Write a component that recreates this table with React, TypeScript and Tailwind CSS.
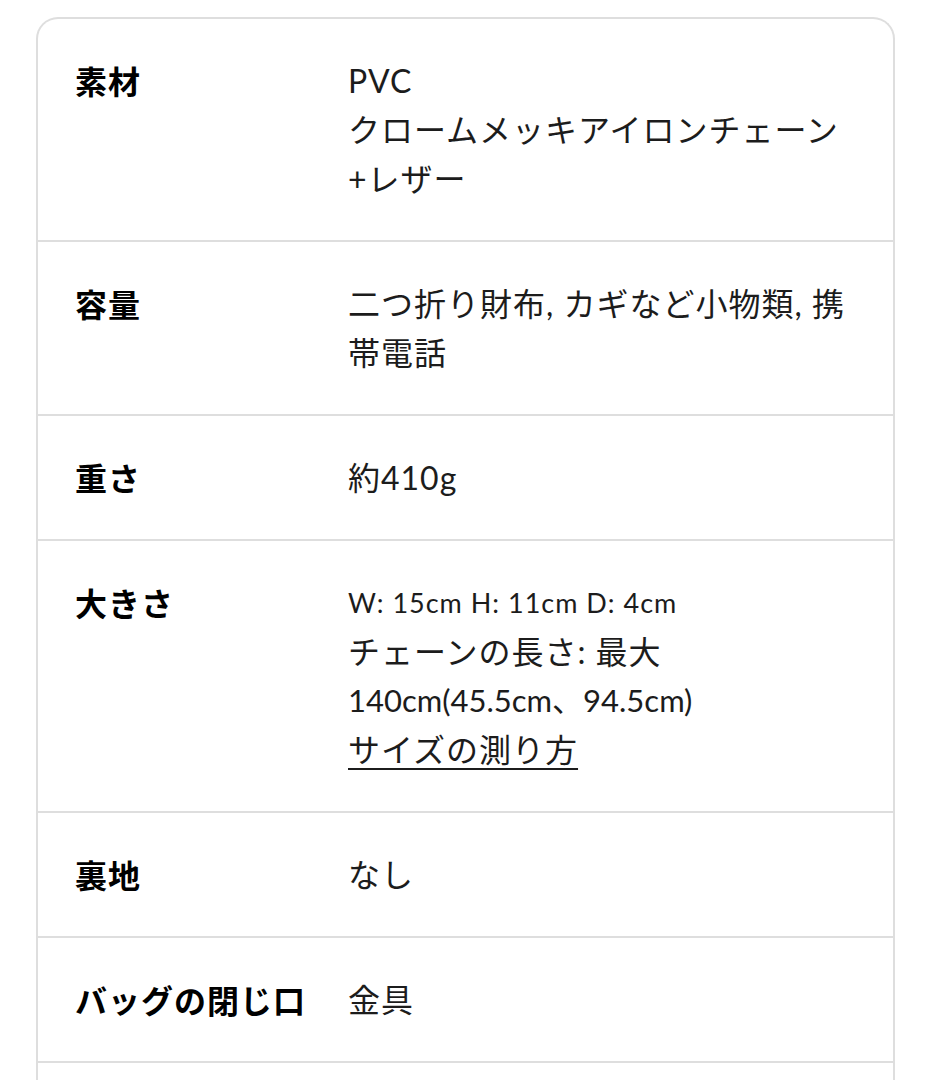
type Line = { text: React.ReactNode; className?: string };

const ROWS: { label: string; lines: Line[] }[] = [
  {
    label: "素材",
    lines: [
      { text: "PVC" },
      { text: "クロームメッキアイロンチェーン" },
      { text: "+レザー" },
    ],
  },
  {
    label: "容量",
    lines: [{ text: "二つ折り財布, カギなど小物類, 携" }, { text: "帯電話" }],
  },
  { label: "重さ", lines: [{ text: "約410g" }] },
  {
    label: "大きさ",
    lines: [
      { text: "W: 15cm H: 11cm D: 4cm", className: "text-[27px]" },
      { text: "チェーンの長さ: 最大" },
      {
        text: "140cm(45.5cm、94.5cm)",
        className: "text-[31px] tracking-normal",
      },
      {
        text: (
          <a
            href="#"
            className="underline decoration-2 underline-offset-[6px]"
          >
            サイズの測り方
          </a>
        ),
      },
    ],
  },
  { label: "裏地", lines: [{ text: "なし" }] },
  { label: "バッグの閉じ口", lines: [{ text: "金具" }] },
];

export default function App() {
  return (
    <div className="min-h-screen bg-white pl-[36px] pr-[36px] pt-[17px] font-['Lato','Noto_Sans_CJK_JP',sans-serif] text-[#1c1c1c]">
      <div className="rounded-t-[22px] border-x-2 border-t-2 border-[#dedede]">
        {ROWS.map((row) => (
          <div
            key={row.label}
            className="grid grid-cols-[273px_1fr] border-b-2 border-[#dedede] px-[37px] py-[37px] text-[32px] leading-[49px] tracking-[1px]"
          >
            <div className="font-['Noto_Sans_CJK_JP',sans-serif] font-bold text-black">
              {row.label}
            </div>
            <div className="flex flex-col">
              {row.lines.map((line, i) => (
                <div
                  key={i}
                  className={`h-[49px] whitespace-nowrap ${line.className ?? ""}`}
                >
                  {line.text}
                </div>
              ))}
            </div>
          </div>
        ))}
        <div className="h-[80px]" />
      </div>
    </div>
  );
}
